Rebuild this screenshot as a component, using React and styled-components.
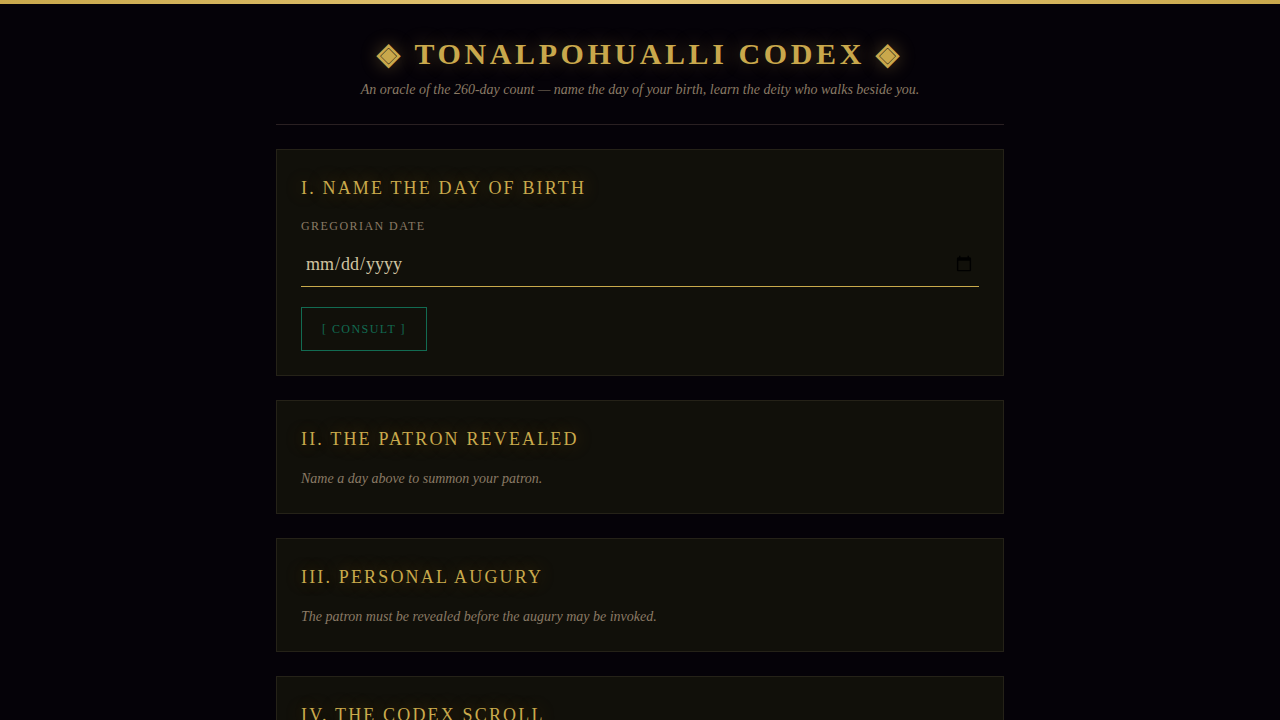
import React, { useState } from "react";
import styled, { createGlobalStyle } from "styled-components";

const GlobalStyle = createGlobalStyle`
  * {
    box-sizing: border-box;
  }
  body {
    margin: 0;
    background-color: #050208;
    color: #d0c3a0;
    font-family: "Liberation Serif", serif;
    font-size: 14px;
    line-height: 20px;
  }
`;

const TopBar = styled.div`
  height: 4px;
  background: linear-gradient(90deg, #c9a84c, #e8c97a, #c9a84c);
`;

const Page = styled.main`
  max-width: 760px;
  margin: 0 auto;
  padding: 28px 16px 48px;
`;

const Header = styled.header`
  padding-bottom: 24px;
  margin-bottom: 24px;
  border-bottom: 1px solid #2a2022;
  text-align: center;
`;

const Title = styled.h1`
  margin: 0 0 4px;
  font-size: 30px;
  font-weight: 700;
  line-height: 44px;
  letter-spacing: 0.12em;
  text-transform: uppercase;
  color: #c9a84c;
  text-shadow: 0 0 18px rgba(201, 168, 76, 0.4);
`;

const Note = styled.p`
  margin: 0;
  font-style: italic;
  color: #8a7a65;
`;

const Panel = styled.section`
  margin-bottom: 24px;
  padding: 24px;
  border: 1px solid #252218;
  background-color: #11100a;
`;

const PanelTitle = styled.h2`
  margin: 0 0 16px;
  font-size: 18px;
  font-weight: 400;
  line-height: 28px;
  letter-spacing: 0.12em;
  text-transform: uppercase;
  color: #c9aa4c;
  text-shadow: 0 0 18px rgba(201, 140, 40, 0.4);
`;

const Label = styled.label`
  display: block;
  margin-bottom: 8px;
  font-size: 12px;
  line-height: 16px;
  letter-spacing: 0.12em;
  text-transform: uppercase;
  color: #8a7a65;
`;

const DateInput = styled.input`
  display: block;
  width: 100%;
  height: 45px;
  margin-bottom: 20px;
  padding: 0 4px;
  border: 0;
  border-bottom: 1px solid #c9aa4c;
  outline: 0;
  background: transparent;
  font-family: inherit;
  font-size: 18px;
  color: inherit;
`;

const ConsultButton = styled.button`
  display: block;
  height: 44px;
  padding: 0 20px;
  border: 1px solid #126b52;
  background: transparent;
  font-family: inherit;
  font-size: 12px;
  letter-spacing: 0.12em;
  text-transform: uppercase;
  color: #126b52;
  cursor: pointer;
`;

const App = () => {
  const [date, setDate] = useState("");

  return (
    <>
      <GlobalStyle />
      <TopBar />
      <Page>
        <Header>
          <Title>◈ Tonalpohualli Codex ◈</Title>
          <Note>
            An oracle of the 260-day count — name the day of your birth, learn
            the deity who walks beside you.
          </Note>
        </Header>
        <Panel>
          <PanelTitle>I. Name the Day of Birth</PanelTitle>
          <Label htmlFor="birth-date">Gregorian Date</Label>
          <DateInput
            id="birth-date"
            type="date"
            value={date}
            onChange={(e) => setDate(e.target.value)}
          />
          <ConsultButton type="button">[ Consult ]</ConsultButton>
        </Panel>
        <Panel>
          <PanelTitle>II. The Patron Revealed</PanelTitle>
          <Note>Name a day above to summon your patron.</Note>
        </Panel>
        <Panel>
          <PanelTitle>III. Personal Augury</PanelTitle>
          <Note>The patron must be revealed before the augury may be invoked.</Note>
        </Panel>
        <Panel>
          <PanelTitle>IV. The Codex Scroll</PanelTitle>
        </Panel>
      </Page>
    </>
  );
};

export default App;
